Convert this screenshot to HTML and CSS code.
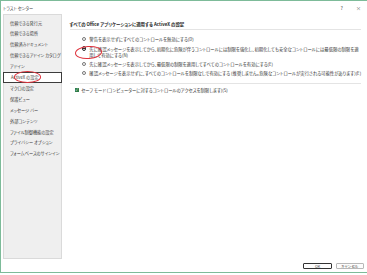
FILE: index.html
```html
<!DOCTYPE html>
<html lang="ja">
<head>
    <meta charset="UTF-8">
    <meta name="viewport" content="width=device-width, initial-scale=1.0">
    <title>トラスト センター</title>
    <link rel="stylesheet" href="styles.css">
</head>
<body>
    <div class="dialog">
        <div class="titlebar">
            <span class="title">トラスト センター</span>
            <span class="controls">
                <span class="help">?</span>
                <span class="close">×</span>
            </span>
        </div>

        <div class="main">
            <nav class="sidebar">
                <div class="item">信頼できる発行元</div>
                <div class="item">信頼できる場所</div>
                <div class="item">信頼済みドキュメント</div>
                <div class="item">信頼できるアドイン カタログ</div>
                <div class="item">アドイン</div>
                <div class="item selected">ActiveX の設定</div>
                <div class="item">マクロの設定</div>
                <div class="item">保護ビュー</div>
                <div class="item">メッセージ バー</div>
                <div class="item">外部コンテンツ</div>
                <div class="item">ファイル制御機能の設定</div>
                <div class="item">プライバシー オプション</div>
                <div class="item">フォームベースのサインイン</div>
            </nav>

            <section class="content">
                <h2>すべての Office アプリケーションに適用する ActiveX の設定</h2>
                <div class="options">
                    <label class="option"><span class="radio"></span><span>警告を表示せずにすべてのコントロールを無効にする(D)</span></label>
                    <label class="option"><span class="radio checked"></span><span>先に確認メッセージを表示してから、初期化に危険が伴うコントロールには制限を強化し、初期化しても安全なコントロールには最低限の制限を適用して有効にする(N)</span></label>
                    <label class="option"><span class="radio"></span><span>先に確認メッセージを表示してから、最低限の制限を適用してすべてのコントロールを有効にする(E)</span></label>
                    <label class="option single"><span class="radio"></span><span>確認メッセージを表示せずに、すべてのコントロールを制限なしで有効にする (推奨しません。危険なコントロールが実行される可能性があります)(E)</span></label>
                </div>
                <label class="check"><span class="box">✓</span><span>セーフ モード (コンピューターに対するコントロールのアクセスを制限します)(S)</span></label>
            </section>
        </div>

        <div class="footer">
            <button class="default">OK</button>
            <button>キャンセル</button>
        </div>

        <span class="mark mark-nav"></span>
        <span class="mark mark-option"></span>
    </div>
</body>
</html>
```

FILE: styles.css
```css
* {
    margin: 0;
    padding: 0;
    box-sizing: border-box;
    font-family: "Noto Sans CJK JP", "Noto Sans", sans-serif;
    font-feature-settings: "palt";
}

body {
    width: 367px;
    height: 275px;
    background: #ffffff;
    overflow: hidden;
}

.dialog {
    position: relative;
    width: 367px;
    height: 273px;
    border-top: 1px solid #7dbb99;
    border-left: 1px solid #7dbb99;
    border-bottom: 1px solid #7dbb99;
    background: #ffffff;
    color: #333;
}

.titlebar {
    height: 13px;
    display: flex;
    justify-content: space-between;
    align-items: center;
    padding: 0 6px 0 2px;
    font-size: 4.2px;
    color: #444;
}

.controls {
    display: flex;
    gap: 13px;
    font-size: 5px;
    color: #555;
}

.main {
    display: flex;
    height: 245px;
}

.sidebar {
    width: 61px;
    margin-left: 2px;
    padding-top: 2.6px;
    background: #efefef;
    border: 1px solid #dadada;
}

.item {
    height: 10.9px;
    line-height: 10.9px;
    padding-left: 6px;
    font-size: 4.2px;
    color: #3a3a3a;
    white-space: nowrap;
}

.item.selected {
    background: #ffffff;
    border: 1px solid #3c3c3c;
    line-height: 8.9px;
    margin: 0 -1px;
    padding-left: 7px;
}

.content {
    flex: 1;
    margin: 0 8px 0 8px;
    padding-top: 6.9px;
    font-size: 4.35px;
    line-height: 6px;
}

h2 {
    font-size: 4.4px;
    font-weight: 700;
    color: #262626;
    padding-bottom: 2.5px;
    border-bottom: 1px solid #e4e4e4;
}

.options {
    display: flex;
    flex-direction: column;
    gap: 3.3px;
    padding: 5.9px 0 7.3px 12px;
    border-bottom: 1px solid #e4e4e4;
}

.option {
    display: flex;
    gap: 3.6px;
    color: #333;
}

.option.single {
    white-space: nowrap;
}

.radio {
    flex: none;
    width: 4.2px;
    height: 4.2px;
    margin-top: 0.9px;
    border: 0.6px solid #777;
    border-radius: 50%;
    background: #fff;
}

.radio.checked {
    border-color: #333;
    background: radial-gradient(circle, #333 0 40%, #fff 45%);
}

.check {
    display: flex;
    gap: 2.5px;
    margin: 2.9px 0 0 5px;
    color: #333;
}

.box {
    flex: none;
    width: 4.2px;
    height: 4.2px;
    margin-top: 0.9px;
    background: #2f7d4a;
    color: #fff;
    font-size: 3.6px;
    line-height: 4.2px;
    text-align: center;
}

.footer {
    display: flex;
    justify-content: flex-end;
    gap: 3.7px;
    padding: 3.6px 3px 0 0;
}

.footer button {
    width: 28.5px;
    height: 6.6px;
    font-size: 3.8px;
    line-height: 5px;
    background: #fdfdfd;
    border: 0.7px solid #b8b8b8;
    border-radius: 1px;
    color: #444;
}

.footer button.default {
    border: 1px solid #333;
}

.mark {
    position: absolute;
    border: 1px solid #df323c;
    border-radius: 50%;
}

.mark-nav {
    left: 13px;
    top: 70px;
    width: 27px;
    height: 11.5px;
}

.mark-option {
    left: 74px;
    top: 45px;
    width: 26.5px;
    height: 12.5px;
    transform: rotate(-4deg);
}
```
